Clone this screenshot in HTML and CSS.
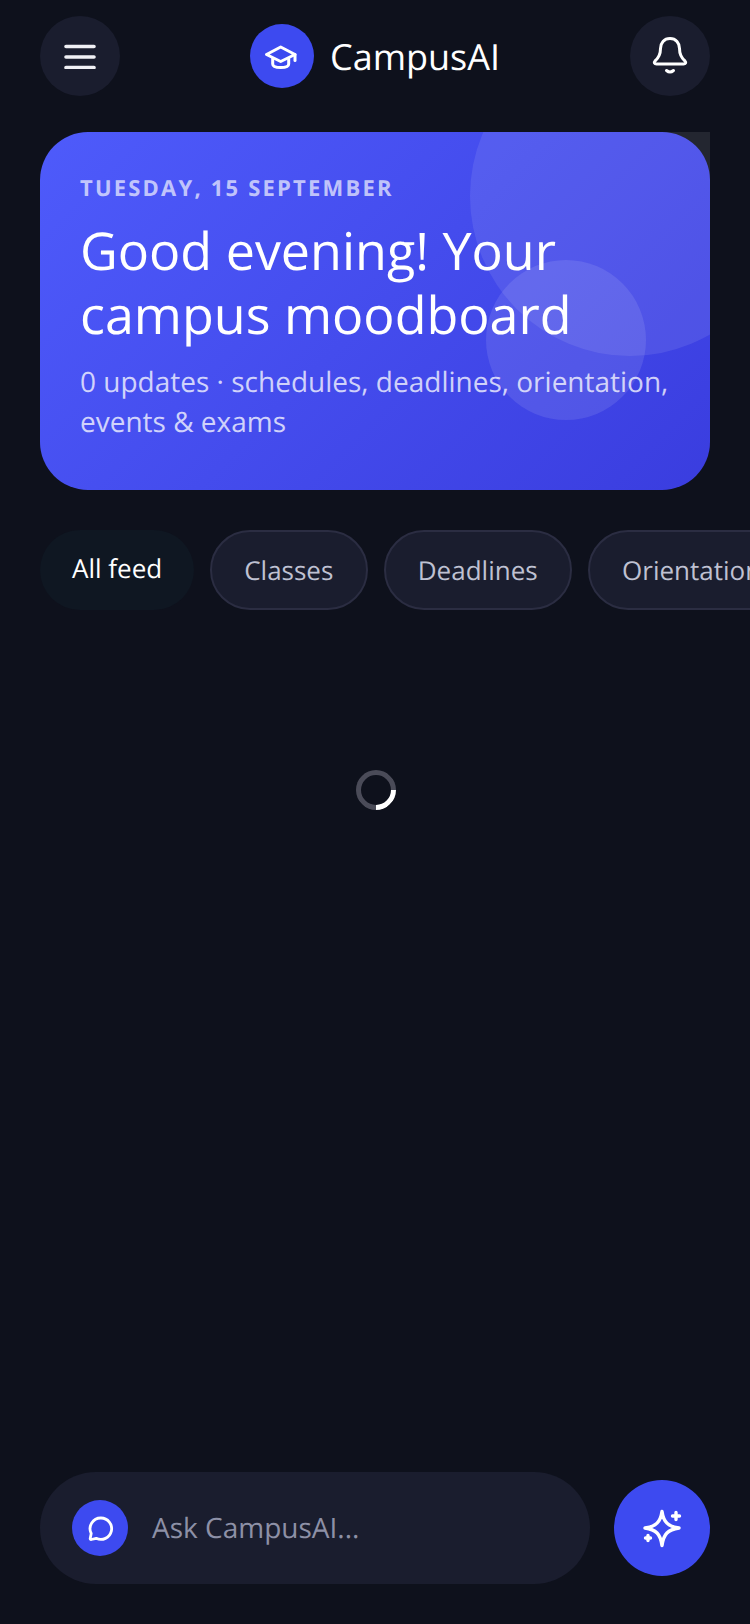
FILE: index.html
```html
<!DOCTYPE html>
<html lang="en">
<head>
    <meta charset="UTF-8">
    <title>CampusAI</title>
    <link rel="stylesheet" href="styles.css">
</head>
<body>
    <header class="topbar">
        <button class="round-btn">
            <svg class="icon-menu" viewBox="0 0 32 24"><path d="M2 2h28M2 12.500h28M2 23h28"/></svg>
        </button>
        <div class="brand">
            <span class="brand-logo">
                <svg viewBox="0 0 64 64"><path d="M30.700 23L45 30.500 30.700 37.500 16.500 30.500z"/><path d="M22.700 34.500v5.500c0 2.500 4 3.500 8 3.500s8-1 8-3.500v-5.500"/><path d="M45 30.500v6"/></svg>
            </span>
            <span class="brand-name">CampusAI</span>
        </div>
        <button class="round-btn">
            <svg class="icon-bell" viewBox="0 0 60 56"><path d="M30 10.500C24 10.500 20.500 15 20.500 20.500 20.500 26 18.500 30 15 33 13.500 34.500 14.500 36 16.500 36H43.500C45.500 36 46.500 34.500 45 33 41.500 30 39.500 26 39.500 20.500 39.500 15 36 10.500 30 10.500z"/><path d="M26.500 42.500Q30 45.500 33.500 42.500"/></svg>
        </button>
    </header>

    <section class="hero">
        <div class="hero-bubbles">
            <span class="bubble bubble-big"></span>
            <span class="bubble bubble-small"></span>
        </div>
        <div class="hero-date">TUESDAY, 15 SEPTEMBER</div>
        <h1 class="hero-title">Good evening! Your campus moodboard</h1>
        <p class="hero-sub">0 updates · schedules, deadlines, orientation, events &amp; exams</p>
    </section>

    <nav class="chips">
        <button class="chip chip-active">All feed</button>
        <button class="chip">Classes</button>
        <button class="chip">Deadlines</button>
        <button class="chip">Orientation</button>
    </nav>

    <main class="feed">
        <div class="spinner"></div>
    </main>

    <footer class="askbar">
        <div class="ask-input">
            <span class="ask-icon">
                <svg viewBox="0 0 28 28"><path d="M15 4a10.700 10.700 0 1 1-4.800 20.300l-5 1.200c-.6.1-1.100-.4-1-1l1-5A10.700 10.700 0 0 1 15 4z"/></svg>
            </span>
            <span class="ask-placeholder">Ask CampusAI...</span>
        </div>
        <button class="fab">
            <svg viewBox="0 0 48 48"><path class="star" d="M24 7.500C25.500 18 30 22.500 41 24 30 25.500 25.500 30 24 41.500 22.500 30 18 25.500 7 24 18 22.500 22.500 18 24 7.500z"/><path d="M38 8.500v7M34.500 12h7M10 31.500v5M7.500 34h5"/></svg>
        </button>
    </footer>
</body>
</html>
```

FILE: styles.css
```css
* {
    box-sizing: border-box;
}
html, body {
    margin: 0;
    height: 100%;
}
body {
    display: flex;
    flex-direction: column;
    height: 1624px;
    overflow: hidden;
    background: #0e111c;
    color: #fff;
    font-family: "Open Sans", sans-serif;
    text-rendering: geometricPrecision;
}
button {
    font-family: inherit;
    text-rendering: inherit;
    border: none;
    padding: 0;
    cursor: pointer;
}
svg {
    display: block;
    fill: none;
    stroke: #fff;
    stroke-linecap: round;
    stroke-linejoin: round;
}

.topbar {
    display: flex;
    justify-content: space-between;
    align-items: center;
    padding: 16px 40px 0;
}
.round-btn {
    display: flex;
    align-items: center;
    justify-content: center;
    width: 80px;
    height: 80px;
    border-radius: 50%;
    background: #1a1d2e;
}
.icon-menu {
    width: 32px;
    height: 25px;
    stroke-width: 3.600;
    stroke: #f0f0f5;
}
.icon-bell {
    width: 60px;
    height: 56px;
    stroke-width: 3;
}
.brand {
    display: flex;
    align-items: center;
    gap: 16px;
}
.brand-logo {
    display: flex;
    width: 64px;
    height: 64px;
    border-radius: 50%;
    background: #3d4af0;
}
.brand-logo svg {
    width: 64px;
    height: 64px;
    stroke-width: 3;
}
.brand-name {
    font-size: 36px;
}

.hero {
    position: relative;
    margin: 36px 40px 0;
    height: 358px;
    padding: 41px 40px 0;
    border-radius: 48px;
    background: linear-gradient(135deg, #4e5bfb 0%, #3a3ddf 100%);
}
.hero-bubbles {
    position: absolute;
    inset: 0;
    overflow: hidden;
}
.bubble {
    position: absolute;
    border-radius: 50%;
}
.bubble-big {
    width: 320px;
    height: 320px;
    top: -96px;
    right: -80px;
    background: rgba(255, 255, 255, 0.09);
}
.bubble-small {
    width: 160px;
    height: 160px;
    top: 128px;
    right: 64px;
    background: rgba(255, 255, 255, 0.1);
}
.hero-date, .hero-title, .hero-sub {
    position: relative;
}
.hero-date {
    font-size: 22px;
    line-height: 30px;
    font-weight: 700;
    letter-spacing: 2.200px;
    color: rgba(255, 255, 255, 0.68);
}
.hero-title {
    margin: 16px 0 0;
    font-size: 52px;
    line-height: 64px;
    font-weight: 400;
}
.hero-sub {
    margin: 15px 0 0;
    font-size: 28px;
    line-height: 40px;
    color: rgba(255, 255, 255, 0.75);
}

.chips {
    display: flex;
    gap: 16px;
    margin-top: 40px;
    padding-left: 40px;
    overflow: hidden;
}
.chip {
    flex: none;
    height: 80px;
    padding: 0 32.400px 0 32px;
    border: 2px solid #2b2d42;
    border-radius: 40px;
    background: #1a1d2e;
    color: #bfc1d2;
    font-size: 26px;
}
.chip-active {
    padding: 0 32px 4px;
    border: none;
    background: #0f1722;
    color: #fff;
}

.feed {
    flex: 1;
    display: flex;
    justify-content: center;
    padding-top: 160px;
    padding-left: 2px;
}
.spinner {
    width: 40px;
    height: 40px;
    border: 5px solid #4a4b58;
    border-right-color: #fff;
    border-radius: 50%;
    transform: rotate(45deg);
}

.askbar {
    display: flex;
    align-items: center;
    justify-content: space-between;
    padding: 0 40px 40px;
}
.ask-input {
    display: flex;
    align-items: center;
    gap: 24px;
    width: 550px;
    height: 112px;
    padding-left: 32px;
    border-radius: 56px;
    background: #1a1d2e;
}
.ask-icon {
    display: flex;
    align-items: center;
    justify-content: center;
    width: 56px;
    height: 56px;
    border-radius: 50%;
    background: #3d4af0;
}
.ask-icon svg {
    width: 28px;
    height: 28px;
    stroke-width: 2.800;
}
.ask-placeholder {
    font-size: 28px;
    color: #8d90a6;
}
.fab {
    display: flex;
    align-items: center;
    justify-content: center;
    width: 96px;
    height: 96px;
    border-radius: 50%;
    background: #3d4af0;
}
.fab svg {
    width: 48px;
    height: 48px;
    stroke-width: 3.400;
}
```
